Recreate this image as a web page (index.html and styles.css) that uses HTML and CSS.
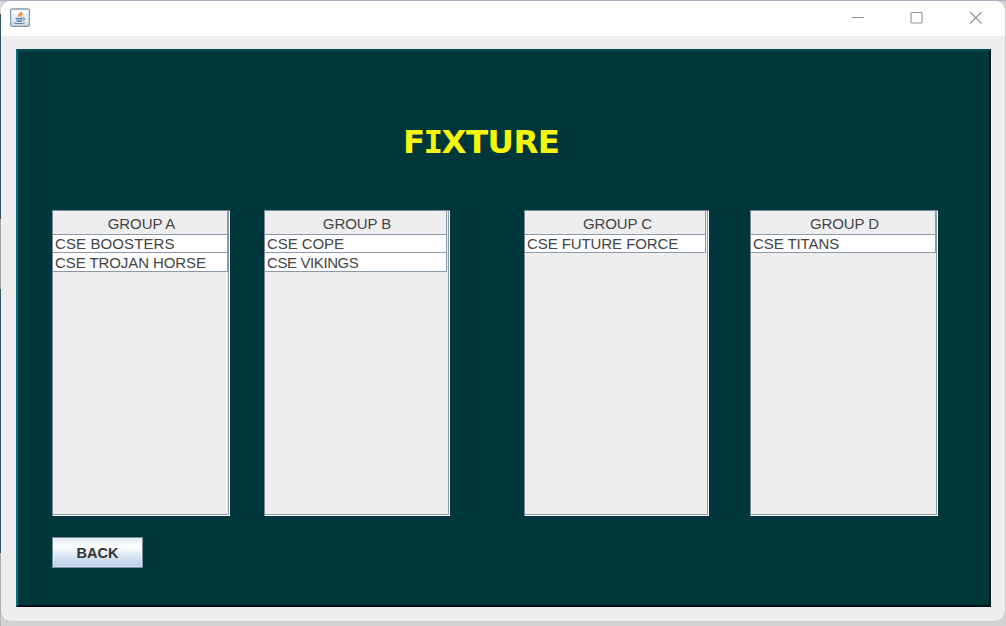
FILE: index.html
```html
<!DOCTYPE html>
<html lang="en">
<head>
<meta charset="utf-8">
<title>Fixture</title>
<link rel="stylesheet" href="styles.css">
</head>
<body>
<main class="window">
  <header class="titlebar">
    <svg class="app-icon" width="20" height="20" viewBox="0 0 20 20" fill="none">
      <defs><linearGradient id="tile" x1="0" y1="0" x2="0" y2="1"><stop stop-color="#fff"/><stop offset="1" stop-color="#cddce8"/></linearGradient></defs>
      <rect x=".6" y="1" width="18.8" height="17.4" rx="1.8" fill="url(#tile)" stroke="#8199aa" stroke-width="1.3"/>
      <path d="M11.3 3.8c.6 2-4 2.6-2.3 4.8M12.6 5.8c-3 1-1.2 2-2 3.1" stroke="#ed8535" stroke-width="1.5"/>
      <path d="M5.5 10c1.3.8 6.5.5 8.2-.1M6.3 11.7c1.7.7 5 .4 6.2 0M6.8 13.2c1.5.5 4 .3 5.2-.1M13.4 10c2-.1 1.5 2-.3 2.3M4.5 14.5c-2 1.2 8.5 1.6 10 .2" stroke="#54758f" stroke-width="1"/>
    </svg>
    <svg class="controls" width="132" height="14" viewBox="0 0 132 14" fill="none" stroke="#929292" stroke-width="1.1">
      <path d="M1 6.5h12"/>
      <rect x="60" y="1.5" width="11" height="10.5" rx="1"/>
      <path d="M119 1l11.5 11.5M130.500 1l-11.5 11.5"/>
    </svg>
  </header>
  <section class="panel">
    <h1 class="title">F<span class="slab">I</span>XTURE</h1>
    <div class="groups">
      <div class="group group-a"><div class="head">GROUP A</div><div class="row loose">CSE BOOSTERS</div><div class="row">CSE TROJAN HORSE</div></div>
      <div class="group group-b"><div class="head">GROUP B</div><div class="row">CSE COPE</div><div class="row tight">CSE VIKINGS</div></div>
      <div class="group group-c"><div class="head">GROUP C</div><div class="row">CSE FUTURE FORCE</div></div>
      <div class="group group-d"><div class="head">GROUP D</div><div class="row">CSE TITANS</div></div>
    </div>
    <button class="back">BACK</button>
  </section>
</main>
</body>
</html>
```
FILE: styles.css
```css
* { box-sizing: border-box; }
body {
  margin: 0;
  width: 1006px;
  height: 626px;
  overflow: hidden;
  padding: 1px 1px 5px;
  background:
    linear-gradient(#b3b0c4, #b3b0c4) 0 0 / 100% 1px no-repeat,
    linear-gradient(#e0e0e8 14px, #2b505b 14px 219px, #a6a6a6 219px 289px, #2b505b 289px 553px, #b5b5b5 553px) 0 0 / 1px 100% no-repeat,
    #d3d3d3;
  font-family: "Liberation Sans", Arial, sans-serif;
  color: #444;
}
.window {
  height: 620px;
  border-radius: 9px;
  background: #eee;
  overflow: hidden;
  box-shadow: 0 0 1px #888;
}
.titlebar {
  height: 35px;
  background: #fff;
  display: flex;
  justify-content: space-between;
  padding: 7px 22px 0 9px;
}
.controls { margin-top: 3px; }
.panel {
  width: 975px;
  height: 558px;
  margin: 13px 0 0 15px;
  background: #00373a;
  border-style: solid;
  border-width: 2px;
  border-color: #004b50 #00191b #001315 #007478;
  padding: 73px 0 0 34px;
}
.title {
  margin: 0 0 0 351px;
  height: 86px;
  font: bold 32.5px/37px "DejaVu Sans", Verdana, sans-serif;
  letter-spacing: -0.6px;
  color: #f6f60c;
  white-space: nowrap;
}
.slab { font-family: "DejaVu Sans Mono", monospace; margin: 0 -1px; }
.groups { display: flex; height: 306px; font-size: 15px; letter-spacing: -0.08px; }
.group {
  background: #eee;
  border: solid #7a8a99;
  border-width: 1px 0 0 1px;
  box-shadow: inset -1px -1px #fff, inset -2px -2px #8b9baa;
  padding-right: 2px;
}
.group-a { width: 178px; margin-right: 34px; }
.group-b { width: 186px; margin-right: 74px; padding-right: 3px; }
.group-c { width: 185px; margin-right: 41px; padding-right: 3px; }
.group-d { width: 188px; }
.head {
  height: 24px;
  line-height: 26px;
  padding-left: 3px;
  text-align: center;
  border: solid #8999a8;
  border-width: 0 1px 1px 0;
}
.group-c .head { padding-left: 5px; }
.row {
  height: 19px;
  line-height: 20px;
  padding-left: 2px;
  background: #fff;
  border: solid #8999a8;
  border-width: 0 1px 1px 0;
  white-space: nowrap;
}
.head + .row { height: 18px; line-height: 18px; }
.loose { letter-spacing: 0.1px; }
.tight { letter-spacing: -0.4px; }
.back {
  display: block;
  width: 91px;
  height: 31px;
  margin-top: 21px;
  padding: 0;
  border: 1px solid #7a8a99;
  background: linear-gradient(#dfe9f3, #fff 30%, #dce7f2 60%, #b8cfe5);
  box-shadow: inset 0 0 0 1px #ffffff55;
  font: bold 14.5px "Liberation Sans", Arial, sans-serif;
  color: #333;
}
```
